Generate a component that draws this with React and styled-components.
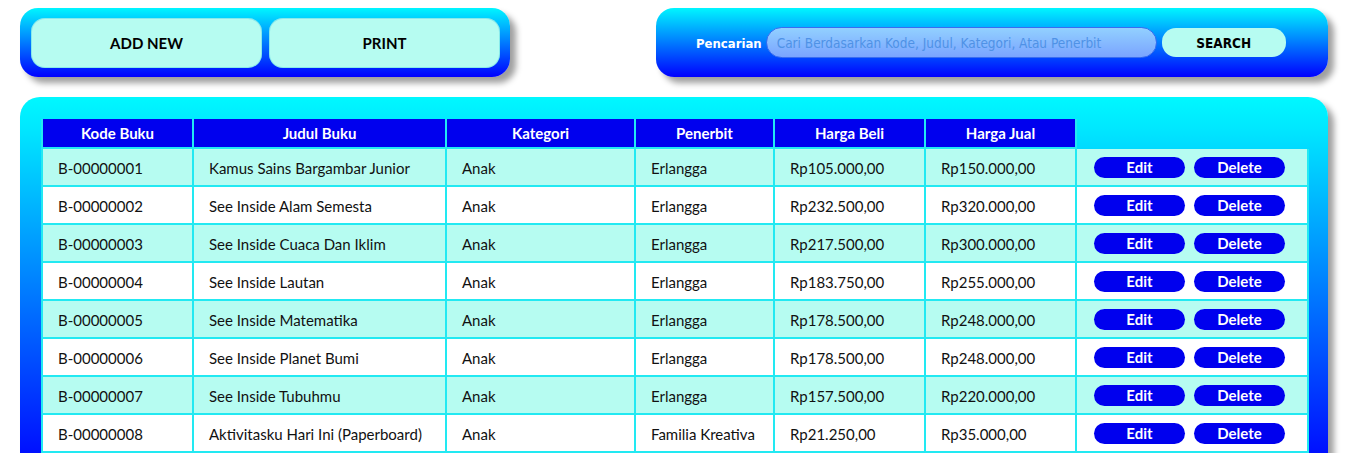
import React from "react";
import styled, { createGlobalStyle } from "styled-components";

const Global = createGlobalStyle`
  html, body { margin: 0; padding: 0; background: #ffffff; }
  body { font-family: Lato, "Open Sans", sans-serif; }
`;

const Page = styled.div`
  width: 1308px;
  padding: 8px 0 0 20px;
  display: flex;
  flex-direction: column;
  gap: 20px;
`;

const TopRow = styled.div`
  display: flex;
  justify-content: space-between;
`;

const Panel = styled.div`
  box-sizing: border-box;
  width: ${(p) => p.$w}px;
  height: ${(p) => p.$h}px;
  border-radius: 18px;
  background: linear-gradient(to bottom, #00f6ff 0%, #0000ff 100%);
  box-shadow: 6px 6px 6px rgba(0, 0, 0, 0.38);
`;

const ActionPanel = styled(Panel)`
  display: flex;
  gap: 7px;
  padding: 10px 10px 9px 11px;
`;

const BigButton = styled.button`
  flex: 1;
  border: none;
  border-radius: 14px;
  background: #b6fcf1;
  box-shadow: inset 0 0 0 1px rgba(0, 180, 220, 0.25);
  font-family: Lato, "Open Sans", sans-serif;
  font-weight: 700;
  font-size: 15px;
  color: #000;
  cursor: pointer;
`;

const SearchPanel = styled(Panel)`
  display: flex;
  align-items: center;
  padding: 0 0 0 40px;
  gap: 4px;
`;

const Condensed = `"Liberation Sans Narrow", "DejaVu Sans Condensed", "Liberation Sans", sans-serif`;

const Label = styled.label`
  font-family: ${Condensed};
  font-weight: 700;
  font-size: 13px;
  color: #ffffff;
  margin-top: 1px;
`;

const SearchInput = styled.input`
  box-sizing: border-box;
  width: 391px;
  height: 31px;
  border-radius: 16px;
  border: 1px solid #3a6cf0;
  background: linear-gradient(to bottom, #92d0ff, #7aa4ff);
  padding: 0 10px;
  font-family: ${Condensed};
  font-size: 13.5px;
  color: #1d3d9a;
  outline: none;
  &::placeholder { color: #4f92e6; }
`;

const SearchButton = styled.button`
  box-sizing: border-box;
  width: 124px;
  height: 29px;
  margin-left: 1px;
  border: none;
  border-radius: 14px;
  background: #b6fcf1;
  font-family: ${Condensed};
  font-weight: 700;
  font-size: 13.5px;
  color: #000;
`;

const TablePanel = styled(Panel)`
  height: auto;
  padding: 22px 21px 24px 21px;
  border-radius: 20px;
  background: linear-gradient(to bottom, #00f8ff 0%, #00e8ff 8%, #0000ff 100%);
`;

const Table = styled.table`
  width: 1266px;
  border-collapse: collapse;
  table-layout: fixed;
  font-family: Lato, "Open Sans", sans-serif;
  font-size: 15px;
`;

const Th = styled.th`
  height: 29px;
  padding: 0;
  box-sizing: border-box;
  background: ${(p) => (p.$empty ? "transparent" : "#0000ee")};
  border: 2px solid ${(p) => (p.$empty ? "transparent" : "#22e9f2")};
  border-top: none;
  color: #ffffff;
  font-weight: 700;
  font-size: 15px;
  text-align: center;
`;

const Tr = styled.tr`
  background: ${(p) => (p.$odd ? "#b6fcf1" : "#ffffff")};
`;

const Td = styled.td`
  height: 35px;
  padding: 1px 0 0 15px;
  border: 2px solid #22e9f2;
  color: #111;
  white-space: nowrap;
  overflow: hidden;
`;

const ActionCell = styled(Td)`
  padding: 1px 0 0 17px;
`;

const Actions = styled.div`
  display: flex;
  gap: 9px;
  align-items: center;
`;

const PillButton = styled.button`
  width: 91px;
  height: 21px;
  padding: 0;
  border: none;
  border-radius: 11px;
  background: #0000ee;
  color: #fff;
  font-family: Lato, "Open Sans", sans-serif;
  font-weight: 700;
  font-size: 15px;
  line-height: 21px;
`;

const cols = [151, 253, 189, 139, 151, 151, 232];

const rows = [
  ["B-00000001", "Kamus Sains Bargambar Junior", "Anak", "Erlangga", "Rp105.000,00", "Rp150.000,00"],
  ["B-00000002", "See Inside Alam Semesta", "Anak", "Erlangga", "Rp232.500,00", "Rp320.000,00"],
  ["B-00000003", "See Inside Cuaca Dan Iklim", "Anak", "Erlangga", "Rp217.500,00", "Rp300.000,00"],
  ["B-00000004", "See Inside Lautan", "Anak", "Erlangga", "Rp183.750,00", "Rp255.000,00"],
  ["B-00000005", "See Inside Matematika", "Anak", "Erlangga", "Rp178.500,00", "Rp248.000,00"],
  ["B-00000006", "See Inside Planet Bumi", "Anak", "Erlangga", "Rp178.500,00", "Rp248.000,00"],
  ["B-00000007", "See Inside Tubuhmu", "Anak", "Erlangga", "Rp157.500,00", "Rp220.000,00"],
  ["B-00000008", "Aktivitasku Hari Ini (Paperboard)", "Anak", "Familia Kreativa", "Rp21.250,00", "Rp35.000,00"],
];

const headers = ["Kode Buku", "Judul Buku", "Kategori", "Penerbit", "Harga Beli", "Harga Jual"];

export default function App() {
  return (
    <>
      <Global />
      <Page>
        <TopRow>
          <ActionPanel $w={490} $h={69}>
            <BigButton>ADD NEW</BigButton>
            <BigButton>PRINT</BigButton>
          </ActionPanel>
          <SearchPanel $w={672} $h={69}>
            <Label>Pencarian</Label>
            <SearchInput placeholder="Cari Berdasarkan Kode, Judul, Kategori, Atau Penerbit" />
            <SearchButton>SEARCH</SearchButton>
          </SearchPanel>
        </TopRow>
        <TablePanel $w={1308}>
          <Table>
            <colgroup>
              {cols.map((w, i) => (
                <col key={i} style={{ width: w }} />
              ))}
            </colgroup>
            <thead>
              <tr>
                {headers.map((h) => (
                  <Th key={h}>{h}</Th>
                ))}
                <Th $empty />
              </tr>
            </thead>
            <tbody>
              {rows.map((r, i) => (
                <Tr key={r[0]} $odd={i % 2 === 0}>
                  {r.map((c, j) => (
                    <Td key={j}>{c}</Td>
                  ))}
                  <ActionCell>
                    <Actions>
                      <PillButton>Edit</PillButton>
                      <PillButton>Delete</PillButton>
                    </Actions>
                  </ActionCell>
                </Tr>
              ))}
            </tbody>
          </Table>
        </TablePanel>
      </Page>
    </>
  );
}
